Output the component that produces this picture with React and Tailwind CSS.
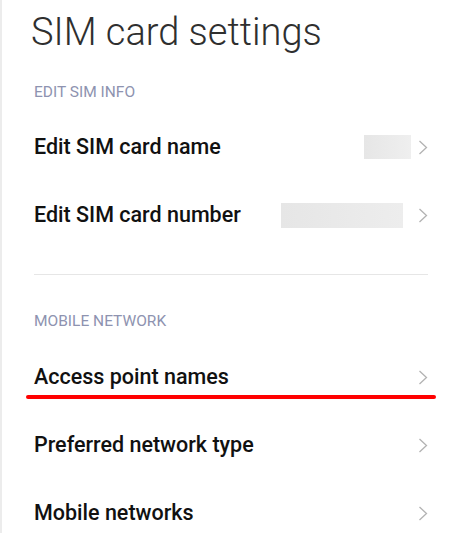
export default function App() {
  const Chevron = () => (
    <svg width="10" height="15" viewBox="0 0 10 15" className="shrink-0">
      <polyline points="1.5,1 8.5,7.5 1.5,14" fill="none" stroke="#b3b3b3" strokeWidth="1.3" />
    </svg>
  );
  const Row = ({ label, box }) => (
    <div className="h-[68px] flex items-center pl-[32px] pr-[32px]">
      <div className="flex-1 text-[21.5px] font-medium text-[#111]">{label}</div>
      {box}
      <Chevron />
    </div>
  );
  return (
    <div
      className="w-[460px] h-[533px] overflow-hidden bg-white border-l-2 border-[#ececec] relative"
      style={{ fontFamily: "Roboto, 'Noto Sans', sans-serif" }}
    >
      <div className="h-[64px] flex items-center pl-[29px] text-[38px] font-light text-[#2f2f2f] leading-none">
        SIM card settings
      </div>
      <div className="h-[49px] pt-[21px] pl-[32px] text-[15.5px] text-[#8e93b0] leading-[15px]">
        EDIT SIM INFO
      </div>
      <Row
        label="Edit SIM card name"
        box={<div className="w-[47px] h-[24px] mr-[7px] bg-gradient-to-r from-[#e6e6e6] to-[#efefef]" />}
      />
      <Row
        label="Edit SIM card number"
        box={<div className="w-[122px] h-[25px] mr-[15px] bg-gradient-to-r from-[#e6e6e6] to-[#ededed]" />}
      />
      <div className="h-[26px] flex items-end px-[32px]">
        <div className="h-px w-full bg-[#e6e6e6]" />
      </div>
      <div className="h-[68px] pt-[39px] pl-[32px] text-[15.5px] text-[#8e93b0] leading-[15px]">
        MOBILE NETWORK
      </div>
      <div className="relative">
        <Row label="Access point names" />
        <div className="absolute left-[24px] top-[52px] w-[410px] h-[4px] rounded-full bg-[#ff0000]" />
      </div>
      <Row label="Preferred network type" />
      <Row label="Mobile networks" />
    </div>
  );
}
